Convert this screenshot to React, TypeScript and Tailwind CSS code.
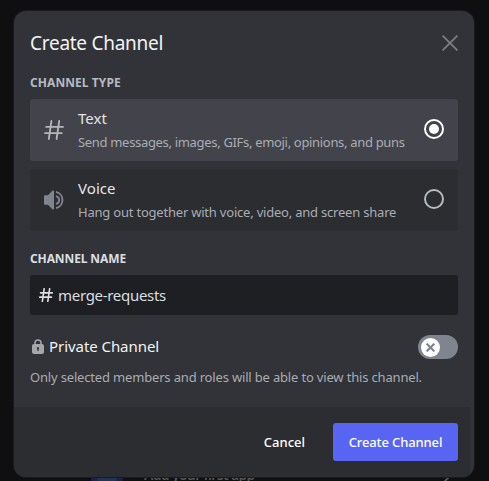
import type { ReactNode } from "react";

function HashIcon({ className, weight = 1.8 }: { className: string; weight?: number }) {
  return (
    <svg className={className} viewBox="0 0 20 20" fill="none" stroke="currentColor" strokeWidth={weight} strokeLinecap="round">
      <path d="M2.2 6.9H19M1 13.1H17.8M7.4 1 4.8 19M15.2 1 12.6 19" />
    </svg>
  );
}

function SpeakerIcon() {
  return (
    <svg className="size-5" viewBox="0 0 20 20" fill="none">
      <path d="M0 6.2Q0 5.2 1 5.2H4L8.5.6Q10 0 10 1.2V18.8Q10 20 8.5 19.4L4 14.8H1Q0 14.8 0 13.8Z" fill="currentColor" />
      <path d="M12 6.1A4 4 0 0 1 12 13.9M12 1.9A8.3 8.3 0 0 1 12 18.1" stroke="currentColor" strokeWidth="1.9" />
    </svg>
  );
}

function LockIcon() {
  return (
    <svg className="h-[15px] w-3" viewBox="0 0 12 15" fill="none">
      <path d="M3 7V4a3 3 0 0 1 6 0V7" stroke="currentColor" strokeWidth="1.5" />
      <rect y="5" width="12" height="10" rx="2" fill="currentColor" />
      <path d="M6 8a1.2 1.2 0 0 1 .6 2.2V12H5.4V10.2A1.2 1.2 0 0 1 6 8Z" fill="#313338" />
    </svg>
  );
}

function Radio({ checked }: { checked: boolean }) {
  return (
    <span className={`mb-0.5 flex size-5 shrink-0 items-center justify-center rounded-full border-2 ${checked ? "border-white" : "border-[#b5bac1]"}`}>
      {checked && <span className="size-2.5 rounded-full bg-white" />}
    </span>
  );
}

function Option({ icon, title, children, checked = false }: { icon: ReactNode; title: string; children: ReactNode; checked?: boolean }) {
  return (
    <div className={`flex h-[62px] items-center rounded-[3px] px-3.5 ${checked ? "bg-[#43444b] text-[#b5b6b9]" : "bg-[#2b2d31] text-[#80848e]"}`}>
      {icon}
      <div className="ml-3.5 min-w-0 flex-1 whitespace-nowrap">
        <div className="mb-[7px] text-[15px] leading-4 tracking-[0.05px] text-[#e3e5e8]">{title}</div>
        {children}
      </div>
      <Radio checked={checked} />
    </div>
  );
}

export default function App() {
  return (
    <main className="relative h-[481px] w-[489px] overflow-hidden bg-[#0f0f11] px-[14px] pt-[11px] font-['Noto_Sans',sans-serif]">
      <div className="absolute top-[461px] left-[91px] size-8 overflow-hidden rounded-full bg-[#20204d]">
        <div className="absolute top-1.5 left-1.5 size-5 rounded-full bg-[#1f3550]" />
      </div>
      <div className="absolute top-[466px] left-36 text-[14px] leading-[18px] font-semibold tracking-[-0.67px] whitespace-nowrap text-[#555558]">Add your first app</div>
      <svg className="absolute top-[471px] left-[438px] size-4 text-[#555558]" viewBox="0 0 16 16" fill="none" stroke="currentColor" strokeWidth="2">
        <path d="m4 1 6 6-6 6" />
      </svg>
      <section className="relative flex h-[466px] w-[460px] flex-col overflow-hidden rounded-xl bg-[#313338] shadow-[0_0_0_1px_#1b1b1f]">
        <div className="flex-1 px-4 whitespace-nowrap">
          <header className="flex h-16 items-center justify-between">
            <h1 className="text-[19px] leading-6 tracking-[-0.27px] text-[#f2f3f5]">Create Channel</h1>
            <svg className="size-4 text-[#7c7d81]" viewBox="0 0 16 16" fill="none" stroke="currentColor" strokeWidth="1.8">
              <path d="m.6.6 14.8 14.8M15.4.6.6 15.4" />
            </svg>
          </header>
          <h2 className="mb-2 text-xs leading-4 font-bold tracking-[0.07px] text-[#b5bac1]">CHANNEL TYPE</h2>
          <div className="flex flex-col gap-2">
            <Option checked title="Text" icon={<HashIcon className="size-5" />}>
              <p className="text-[13px] leading-[18px] tracking-[-0.32px] text-[#a9acb3]">Send messages, images, GIFs, emoji, opinions, and puns</p>
            </Option>
            <Option title="Voice" icon={<SpeakerIcon />}>
              <p className="text-[13px] leading-[18px] tracking-[-0.21px] text-[#a9acb3]">Hang out together with voice, video, and screen share</p>
            </Option>
          </div>
          <h2 className="mt-5 mb-2 text-xs leading-4 font-bold tracking-[-0.11px] text-[#dbdee1]">CHANNEL NAME</h2>
          <div className="flex h-10 items-center rounded-[3px] bg-[#1e1f22] pl-[9px] text-[#dbdee1]">
            <HashIcon className="mr-[5px] size-[14px]" weight={2.3} />
            <span className="text-[15px] tracking-[-0.3px]">merge-requests</span>
          </div>
          <div className="mt-5 flex h-6 items-center text-[#a5a6a9]">
            <span className="mb-0.5 ml-0.5"><LockIcon /></span>
            <span className="mb-0.5 ml-[5px] text-[15px] tracking-[-0.06px] text-[#f2f3f5]">Private Channel</span>
            <span className="ml-auto flex h-6 w-10 items-center rounded-full bg-[#80848e] pl-[3px]">
              <span className="flex size-[19px] items-center justify-center rounded-full bg-white">
                <svg className="size-[9px] text-[#80848e]" viewBox="0 0 8 8" stroke="currentColor" strokeWidth="1.9">
                  <path d="m.6.6 6.8 6.8M7.4.6.6 7.4" />
                </svg>
              </span>
            </span>
          </div>
          <p className="mt-[9px] text-[13px] leading-[18px] tracking-[-0.17px] text-[#a9acb1]">Only selected members and roles will be able to view this channel.</p>
        </div>
        <footer className="mr-1 flex h-[70px] items-center justify-end bg-[#2b2d31] pr-3 text-[13px] font-medium text-white">
          <button className="mr-7 pt-px tracking-[0px]">Cancel</button>
          <button className="h-[38px] w-[125px] rounded-[3px] bg-[#5865f2] pt-0.5 tracking-[-0.12px]">Create Channel</button>
        </footer>
      </section>
    </main>
  );
}
